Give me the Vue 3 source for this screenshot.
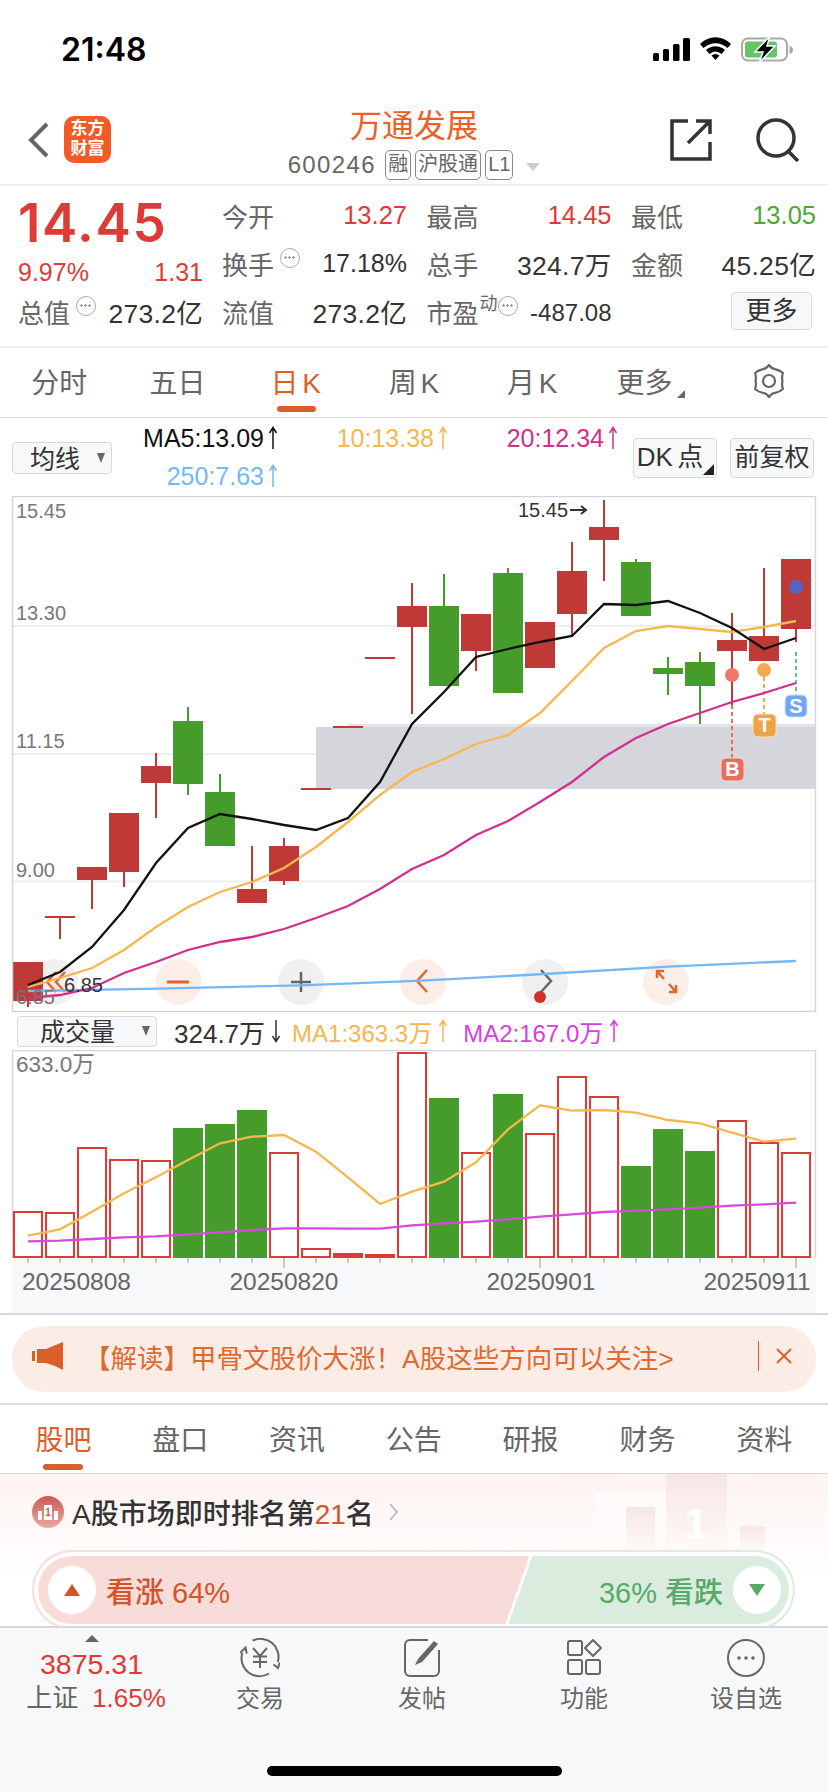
<script setup>
// 25 daily candles: [high, top, bottom, low, up?] in page y coordinates
const candles = [
  [962, 962, 1001, 1007, 1],
  [917, 916, 918, 939, 1],
  [867, 867, 880, 909, 1],
  [813, 813, 872, 887, 1],
  [753, 766, 783, 818, 1],
  [707, 721, 784, 795, 0],
  [774, 792, 846, 846, 0],
  [846, 889, 903, 903, 1],
  [838, 846, 881, 885, 1],
  [789, 788, 790, 790, 1],
  [727, 726, 728, 728, 1],
  [658, 657, 659, 659, 1],
  [583, 606, 627, 714, 1],
  [574, 606, 686, 686, 0],
  [614, 614, 651, 671, 1],
  [568, 573, 693, 693, 0],
  [622, 622, 668, 668, 1],
  [542, 571, 614, 636, 1],
  [500, 527, 540, 581, 1],
  [559, 562, 616, 616, 0],
  [657, 668, 674, 695, 0],
  [652, 662, 686, 724, 0],
  [613, 640, 651, 705, 1],
  [568, 636, 661, 661, 1],
  [559, 559, 629, 642, 1],
];
const cx = (i) => 28 + i * 32;

const ma5 = [985, 972, 947, 910, 863, 828, 814, 819, 825, 830, 818, 782, 724, 692, 657, 649, 642, 636, 604, 605, 601, 613, 628, 649, 638];
const ma10 = [987, 978, 968, 950, 927, 907, 892, 882, 868, 847, 822, 795, 772, 759, 744, 735, 713, 681, 648, 631, 626, 629, 632, 627, 621];
const ma20 = [998, 995, 988, 973, 962, 950, 942, 937, 929, 918, 906, 889, 869, 855, 835, 821, 802, 782, 757, 738, 724, 713, 702, 693, 683];
const toPoints = (arr) => arr.map((y, i) => `${cx(i)},${y}`).join(" ");
const ma250 = "28,991 158,988.7 301,985.3 422,980.7 544,974 668,966.7 796,961";

// volume bars, top y; green when down
const volumes = [1211, 1212, 1147, 1159, 1160, 1128, 1124, 1110, 1152, 1248, 1253, 1254, 1052, 1098, 1152, 1094, 1133, 1076, 1096, 1166, 1129, 1151, 1120, 1142, 1152];
const volDown = [5, 6, 7, 13, 15, 19, 20, 21];
const volMa1 = [587, 568, 515, 460, 412, 360, 310, 290, 285, 335, 412, 492, 455, 425, 367, 268, 196, 212, 210, 218, 240, 250, 278, 305, 296].map((v) => 1040 + v / 3);
const volMa2 = [604, 602, 597, 592, 589, 583, 577, 570, 565, 565, 566, 566, 556, 550, 545, 538, 530, 523, 516, 512, 508, 503, 497, 493, 488].map((v) => 1040 + v / 3);

const legend = [
  { text: "MA5:13.09", color: "#111" },
  { text: "10:13.38", color: "#f5b74e" },
  { text: "20:12.34", color: "#d0308c" },
  { text: "250:7.63", color: "#74b8f8" },
];

const topTabs = ["分时", "五日", "日 K", "周 K", "月 K"];
const lowerTabs = ["股吧", "盘口", "资讯", "公告", "研报", "财务", "资料"];
</script>

<template>
  <div class="page">
    <!-- status bar -->
    <div class="status">
      <span class="time">21:48</span>
      <svg class="status-icons" width="146" height="30" viewBox="650 34 146 30">
        <rect x="653" y="53" width="6" height="8" rx="1.5" fill="#000" />
        <rect x="663" y="49" width="6" height="12" rx="1.5" fill="#000" />
        <rect x="673" y="44" width="6.5" height="17" rx="1.5" fill="#000" />
        <rect x="683" y="38" width="7" height="23" rx="1.5" fill="#000" />
        <path d="M700 44 C709 35 722 35 731 44 L727.5 48 C720.5 41.500 710.500 41.500 703.500 48 Z" fill="#000" />
        <path d="M706 50 C712 45 719 45 725 50 L721.500 54 C717.500 50.500 713.500 50.500 709.500 54 Z" fill="#000" />
        <path d="M711.500 55.500 C714 53.500 717 53.500 719.500 55.500 L715.500 60 Z" fill="#000" />
        <rect x="742" y="38.500" width="45" height="22" rx="6" fill="none" stroke="#a9a9a9" stroke-width="2" />
        <rect x="745" y="41.500" width="32" height="16" rx="3" fill="#64c466" />
        <path d="M789.500 46 C792 46.500 793 48 793 50 C793 52 792 53 789.500 54 Z" fill="#a9a9a9" />
        <path d="M770 36 L755 52 H763 L759 63 L775 46 H767 Z" fill="#000" stroke="#fff" stroke-width="1.500" />
      </svg>
    </div>

    <!-- nav bar -->
    <div class="nav">
      <div class="nav-left">
        <svg width="22" height="36" viewBox="0 0 22 36"><path d="M19 2 L3 18 L19 34" fill="none" stroke="#666" stroke-width="4" /></svg>
        <div class="logo">东方<br />财富</div>
      </div>
      <div class="nav-center">
        <div class="name">万通发展</div>
        <div class="code">
          <span class="code-num">600246</span>
          <span class="tag">融</span>
          <span class="tag">沪股通</span>
          <span class="tag">L1</span>
          <span class="caret"></span>
        </div>
      </div>
      <div class="nav-right">
        <svg width="44" height="44" viewBox="0 0 44 44">
          <path d="M19 3 H3 V41 H41 V24" fill="none" stroke="#333" stroke-width="3.500" />
          <path d="M27 3 H41 V16 M41 3 L19 25" fill="none" stroke="#333" stroke-width="3.500" />
        </svg>
        <svg width="44" height="44" viewBox="0 0 44 44">
          <circle cx="20" cy="20" r="18" fill="none" stroke="#333" stroke-width="3.500" />
          <path d="M32 33 L42 43" stroke="#333" stroke-width="3.500" />
        </svg>
      </div>
    </div>

    <!-- quote -->
    <div class="quote">
      <div class="quote-left">
        <div class="price">14.45</div>
        <div class="cell change"><span>9.97%</span><span>1.31</span></div>
        <div class="cell total"><span class="lab">总值<i class="more-dot"></i></span><span class="val">273.2亿</span></div>
      </div>
      <div class="quote-grid">
        <div class="cell"><span class="lab">今开</span><span class="red">13.27</span></div>
        <div class="cell"><span class="lab">最高</span><span class="red">14.45</span></div>
        <div class="cell"><span class="lab">最低</span><span class="green">13.05</span></div>
        <div class="cell"><span class="lab">换手<i class="more-dot"></i></span><span class="val pct">17.18%</span></div>
        <div class="cell"><span class="lab">总手</span><span class="val">324.7万</span></div>
        <div class="cell"><span class="lab">金额</span><span class="val">45.25亿</span></div>
        <div class="cell"><span class="lab">流值</span><span class="val">273.2亿</span></div>
        <div class="cell"><span class="lab">市盈<sup class="dyn">动</sup><i class="more-dot"></i></span><span class="val small">-487.08</span></div>
        <div class="cell end"><span class="more-btn">更多</span></div>
      </div>
    </div>

    <!-- period tabs -->
    <div class="period-tabs">
      <div v-for="(t, i) in topTabs" :key="t" class="ptab" :class="{ active: i === 2 }">{{ t }}</div>
      <div class="ptab ptab-more">更多<span class="corner"></span></div>
      <div class="ptab">
        <svg width="36" height="36" viewBox="0 0 36 36">
          <path d="M18 2 Q21 6 24.750 6.300 Q28.500 7 31.900 10 Q30.500 14 31.500 18 Q30.500 22 31.900 26 Q28.500 29 24.750 29.700 Q21 30 18 34 Q15 30 11.250 29.700 Q7.500 29 4.100 26 Q5.500 22 4.500 18 Q5.500 14 4.100 10 Q7.500 7 11.250 6.300 Q15 6 18 2 Z" fill="none" stroke="#666" stroke-width="2.200" stroke-linejoin="round" />
          <circle cx="18" cy="18" r="6" fill="none" stroke="#666" stroke-width="2.200" />
        </svg>
      </div>
    </div>

    <!-- moving averages -->
    <div class="ma-row">
      <div class="select sel-ma">均线<span class="down"></span></div>
      <div class="legend">
        <span v-for="l in legend" :key="l.text" class="leg" :style="{ color: l.color }">
          {{ l.text }}
          <svg width="10" height="24" viewBox="0 0 10 24"><path d="M5 23 V2 M1.500 7 L5 1.500 L8.500 7" fill="none" stroke="currentColor" stroke-width="1.500" /></svg>
        </span>
      </div>
      <div class="opt dk">DK 点<span class="corner dark"></span></div>
      <div class="opt">前复权</div>
    </div>

    <!-- price chart, drawn in page coordinates -->
    <svg class="chart" width="828" height="516" viewBox="0 496 828 516">
      <path d="M13 626 H815 M13 754 H815 M13 881.500 H815" stroke="#eeeef2" stroke-width="2" />
      <rect x="316" y="727" width="499" height="62" fill="#d5d6dc" />
      <rect x="348" y="724" width="467" height="3" fill="#e3e4e8" />

      <g>
        <circle cx="55" cy="982" r="23" fill="#f0f0f1" />
        <circle cx="178.500" cy="982" r="23" fill="#fbeee8" />
        <circle cx="301" cy="982" r="23" fill="#f0f0f1" />
        <circle cx="423" cy="982" r="23" fill="#fbeee8" />
        <circle cx="545" cy="982" r="23" fill="#f0f0f1" />
        <circle cx="666" cy="982" r="23" fill="#fbeee8" />
        <path d="M56 972 L47 982 L56 992 M65 972 L56 982 L65 992" fill="none" stroke="#e0662e" stroke-width="2.500" />
        <path d="M167 982 H189" stroke="#e0662e" stroke-width="3" />
        <path d="M291 982 H311 M301 972 V992" stroke="#666" stroke-width="2.500" />
        <path d="M427 970 L417 981 L427 992" fill="none" stroke="#e0662e" stroke-width="2.500" />
        <path d="M541 970 L551 981 L541 992" fill="none" stroke="#666" stroke-width="2.500" />
        <circle cx="540" cy="997" r="6" fill="#d0302a" />
        <path d="M657 978 V971 H664 M657 971 L664 979 M676 985 V992 H669 M676 992 L669 984" fill="none" stroke="#e0662e" stroke-width="2.500" />
      </g>

      <g v-for="(c, i) in candles" :key="i" :fill="c[4] ? '#bf3a36' : '#459c2b'">
        <rect :x="cx(i) - 1" :y="c[0]" width="2" :height="c[3] - c[0]" />
        <rect :x="cx(i) - 15" :y="c[1]" width="30" :height="c[2] - c[1]" />
      </g>

      <path d="M732 705 V758" stroke="#e66f5e" stroke-width="2" stroke-dasharray="4 3" />
      <path d="M764 670 V714" stroke="#f2a94e" stroke-width="2" stroke-dasharray="4 3" />
      <path d="M796 652 V695" stroke="#6fa6f7" stroke-width="2" stroke-dasharray="4 3" />
      <circle cx="732" cy="675" r="7" fill="#f07868" />
      <circle cx="764" cy="670" r="7" fill="#f4a94f" />
      <circle cx="796" cy="587" r="7" fill="#5464c4" />

      <polyline :points="ma250" fill="none" stroke="#74b8f8" stroke-width="2.300" />
      <polyline :points="toPoints(ma20)" fill="none" stroke="#d0308c" stroke-width="2.300" />
      <polyline :points="toPoints(ma10)" fill="none" stroke="#f5b74e" stroke-width="2.300" />
      <polyline :points="toPoints(ma5)" fill="none" stroke="#111" stroke-width="2.300" />

      <g class="mark">
        <rect x="721" y="758" width="23" height="23" rx="5" fill="#e66f5e" stroke="#f9d6d0" />
        <text x="732.500" y="776" fill="#fff">B</text>
        <rect x="753" y="714" width="23" height="23" rx="5" fill="#eda448" stroke="#fbe2bf" />
        <text x="764.500" y="732" fill="#fff">T</text>
        <rect x="785" y="695" width="22" height="22" rx="5" fill="#6fa6f7" stroke="#d5e4fc" />
        <text x="796" y="713" fill="#fff">S</text>
      </g>

      <g class="axis">
        <text x="16" y="518">15.45</text>
        <text x="16" y="620">13.30</text>
        <text x="16" y="748">11.15</text>
        <text x="16" y="877">9.00</text>
        <text x="16" y="1004">6.85</text>
      </g>
      <text class="peak" x="518" y="517">15.45</text>
      <path d="M570 510 H586 M581 506 L586 510 L581 514" fill="none" stroke="#333" stroke-width="2" />
      <text class="peak" x="64" y="992">6.85</text>
      <rect x="12.500" y="496.500" width="803" height="515" fill="none" stroke="#d5d6dc" stroke-width="1.500" />
    </svg>

    <!-- volume header -->
    <div class="vol-head">
      <div class="select sel-vol">成交量<span class="down"></span></div>
      <span class="vol-item vol-now" style="color: #333">324.7万
        <svg width="10" height="24" viewBox="0 0 10 24"><path d="M5 1 V22 M1.500 17 L5 22.500 L8.500 17" fill="none" stroke="currentColor" stroke-width="1.500" /></svg>
      </span>
      <span class="vol-item vol-ma1" style="color: #f5b74e">MA1:363.3万
        <svg width="10" height="24" viewBox="0 0 10 24"><path d="M5 23 V2 M1.500 7 L5 1.500 L8.500 7" fill="none" stroke="currentColor" stroke-width="1.500" /></svg>
      </span>
      <span class="vol-item" style="color: #d63fe0">MA2:167.0万
        <svg width="10" height="24" viewBox="0 0 10 24"><path d="M5 23 V2 M1.500 7 L5 1.500 L8.500 7" fill="none" stroke="currentColor" stroke-width="1.500" /></svg>
      </span>
    </div>

    <!-- volume chart + date axis -->
    <svg class="chart vol-chart" width="828" height="263" viewBox="0 1050 828 263">
      <rect x="12" y="1258" width="804" height="55" fill="#f7f8fa" />
      <path d="M12.500 1258 V1050.500 H815.500 V1258" fill="none" stroke="#d5d6dc" stroke-width="1.500" />
      <template v-for="(top, i) in volumes" :key="i">
        <rect v-if="volDown.includes(i)" :x="cx(i) - 15" :y="top" width="30" :height="1258 - top" fill="#459c2b" />
        <rect v-else-if="1258 - top < 6" :x="cx(i) - 15" :y="top" width="30" :height="1258 - top" fill="#e03a36" />
        <rect v-else :x="cx(i) - 14" :y="top + 1" width="28" :height="1256 - top" fill="#fff" stroke="#e03a36" stroke-width="2" />
        <path :d="`M${cx(i)} 1258 V${i === 8 || i === 16 || i === 24 ? 1268 : 1263}`" stroke="#bbb" stroke-width="1.500" />
      </template>
      <polyline :points="toPoints(volMa1)" fill="none" stroke="#f5b74e" stroke-width="2.300" />
      <polyline :points="toPoints(volMa2)" fill="none" stroke="#d64ae0" stroke-width="2.300" />
      <text class="vol-max" x="16" y="1072">633.0万</text>
      <g class="dates">
        <text x="76.500" y="1290">20250808</text>
        <text x="284" y="1290">20250820</text>
        <text x="541" y="1290">20250901</text>
        <text x="757" y="1290">20250911</text>
      </g>
    </svg>

    <!-- notice -->
    <div class="notice">
      <svg width="32" height="28" viewBox="0 0 32 28">
        <path d="M0 9 H3 V19 H0 Z M5 7 H14 L31 0 V28 L23 24 L14 21 H5 Z" fill="#d9602a" />
      </svg>
      <span class="notice-text">【解读】甲骨文股价大涨！A股这些方向可以关注&gt;</span>
      <span class="notice-sep"></span>
      <svg width="16" height="16" viewBox="0 0 16 16"><path d="M1 1 L15 15 M15 1 L1 15" stroke="#d9602a" stroke-width="2" /></svg>
    </div>

    <!-- lower tabs -->
    <div class="lower-tabs">
      <div v-for="(t, i) in lowerTabs" :key="t" class="ltab" :class="{ active: i === 0 }">{{ t }}</div>
    </div>

    <!-- sentiment panel -->
    <div class="panel">
      <svg class="podium" width="280" height="90" viewBox="548 1474 280 90">
        <defs>
          <linearGradient id="fade" x1="0" y1="0" x2="0" y2="1">
            <stop offset="0" stop-color="#f7e6e4" />
            <stop offset="1" stop-color="#fef9f8" />
          </linearGradient>
          <linearGradient id="fadeLight" x1="0" y1="0" x2="0" y2="1">
            <stop offset="0" stop-color="#fcf3f1" />
            <stop offset="1" stop-color="#fffcfb" />
          </linearGradient>
        </defs>
        <rect x="556" y="1474" width="62" height="76" fill="url(#fadeLight)" />
        <rect x="596" y="1492" width="70" height="58" fill="#fffbfa" />
        <rect x="626" y="1507" width="29" height="43" fill="url(#fade)" />
        <rect x="666" y="1474" width="61" height="76" fill="url(#fade)" />
        <text x="696" y="1538" class="podium-one">1</text>
        <rect x="748" y="1474" width="72" height="76" fill="url(#fadeLight)" />
        <rect x="740" y="1526" width="25" height="24" fill="url(#fade)" />
      </svg>
      <div class="rank">
        <svg width="32" height="32" viewBox="0 0 32 32">
          <defs>
            <linearGradient id="rankBg" x1="0" y1="0" x2="0" y2="1">
              <stop offset="0" stop-color="#cf5a53" />
              <stop offset="1" stop-color="#e9a9a3" />
            </linearGradient>
          </defs>
          <circle cx="16" cy="16" r="16" fill="url(#rankBg)" />
          <path d="M6 24 V15 H10 V24 Z M12 24 V9 H20 V24 Z M22 24 V15 H26 V24 Z" fill="#fff" />
          <text x="16" y="20" class="rank-one">1</text>
        </svg>
        <span class="rank-text">A股市场即时排名第<em>21</em>名</span>
        <svg width="9" height="18" viewBox="0 0 9 18"><path d="M1 1 L8 9 L1 17" fill="none" stroke="#bbb" stroke-width="1.800" /></svg>
      </div>
      <div class="ring">
        <div class="bull-bear">
          <div class="bull">
            <span class="knob"><i class="tri up"></i></span>
            <span>看涨 64%</span>
          </div>
          <div class="bear">
            <span>36% 看跌</span>
            <span class="knob"><i class="tri dn"></i></span>
          </div>
        </div>
      </div>
    </div>

    <!-- bottom bar -->
    <div class="bottom">
      <div class="bar-items">
        <div class="index">
          <i class="index-tri"></i>
          <div class="index-num">3875.31</div>
          <div class="index-row"><span class="gray">上证</span><span class="red">1.65%</span></div>
        </div>
        <div class="bar-item">
          <svg width="40" height="40" viewBox="0 0 40 40" fill="none" stroke="#666" stroke-width="2">
            <path d="M12.600 2.700 A18 18 0 0 1 37.800 24" />
            <path d="M33.500 26.500 L38 30 L39.800 24.500" />
            <path d="M29 35.500 A18 18 0 0 1 2.300 15" />
            <path d="M0.200 15 L5.500 9.500 L6.800 15.500" />
            <path d="M13 10 L20 18 L27 10 M13 18.500 H27 M13 24 H27 M20 18 V30" />
          </svg>
          <span>交易</span>
        </div>
        <div class="bar-item">
          <svg width="40" height="40" viewBox="0 0 40 40" fill="none" stroke="#666" stroke-width="2">
            <path d="M26 2 H8 A5 5 0 0 0 3 7 V33 A5 5 0 0 0 8 38 H32 A5 5 0 0 0 37 33 V12" />
            <path d="M13 27 L16 21 L32 3 L36 6 L20 24 Z" fill="#666" stroke="none" />
          </svg>
          <span>发帖</span>
        </div>
        <div class="bar-item">
          <svg width="40" height="40" viewBox="0 0 40 40" fill="none" stroke="#666" stroke-width="2">
            <rect x="4" y="3" width="14" height="14" rx="2" />
            <rect x="4" y="22" width="14" height="14" rx="2" />
            <rect x="22" y="22" width="14" height="14" rx="2" />
            <path d="M29 2 L37 10 L29 18 L21 10 Z" stroke-linejoin="round" />
          </svg>
          <span>功能</span>
        </div>
        <div class="bar-item">
          <svg width="40" height="40" viewBox="0 0 40 40">
            <circle cx="20" cy="20" r="18" fill="none" stroke="#666" stroke-width="2" />
            <circle cx="13" cy="20" r="1.800" fill="#666" />
            <circle cx="20" cy="20" r="1.800" fill="#666" />
            <circle cx="27" cy="20" r="1.800" fill="#666" />
          </svg>
          <span>设自选</span>
        </div>
      </div>
      <div class="home-bar"></div>
    </div>
  </div>
</template>

<style>
html,
body {
  margin: 0;
  background: #fff;
}
</style>

<style scoped>
.page {
  position: relative;
  width: 828px;
  height: 1792px;
  overflow: hidden;
  background: #fff;
  font-family: "Liberation Sans", "Noto Sans CJK SC", sans-serif;
  color: #333;
}

.status {
  height: 100px;
  display: flex;
  justify-content: space-between;
  padding-left: 61px;
  padding-right: 32px;
}
.time {
  font-family: Inter, sans-serif;
  font-weight: 600;
  font-size: 32px;
  line-height: 100px;
  color: #000;
}
.status-icons {
  margin-top: 34px;
}

.nav {
  height: 84px;
  display: flex;
  border-bottom: 2px solid #efefef;
  position: relative;
}
.nav-left {
  width: 111px;
  display: flex;
  align-items: flex-start;
  padding-left: 28px;
  padding-top: 16px;
  box-sizing: border-box;
}
.nav-left svg {
  margin-top: 6px;
}
.logo {
  margin-left: 14px;
  width: 47px;
  height: 47px;
  border-radius: 10px;
  background: #ef5c26;
  color: #fff;
  font-size: 17px;
  font-weight: 700;
  line-height: 20px;
  text-align: center;
  padding-top: 3px;
  box-sizing: border-box;
}
.nav-center {
  position: absolute;
  left: 0;
  right: 0;
  top: 6px;
  text-align: center;
}
.name {
  color: #ec5f27;
  font-size: 32px;
  line-height: 40px;
  height: 40px;
}
.code {
  display: flex;
  justify-content: center;
  align-items: center;
  gap: 4px;
  height: 32px;
  margin-top: 3px;
}
.code-num {
  font-size: 24px;
  color: #666;
  letter-spacing: 1.4px;
  margin-right: 5px;
}
.tag {
  border: 1px solid #888;
  border-radius: 5px;
  font-size: 20px;
  color: #666;
  height: 28px;
  line-height: 27px;
  padding: 0 2px;
}
.caret {
  margin-left: 9px;
  margin-top: 3px;
  border-left: 7px solid transparent;
  border-right: 7px solid transparent;
  border-top: 8px solid #ccc;
}
.nav-right {
  margin-left: auto;
  display: flex;
  gap: 43px;
  padding-right: 28px;
  padding-top: 18px;
  position: relative;
}

.quote {
  display: flex;
  height: 162px;
  box-sizing: border-box;
  padding: 5px 0 0 18px;
  border-bottom: 2px solid #efefef;
}
.quote-left {
  width: 185px;
  margin-right: 19px;
}
.price {
  height: 54px;
  line-height: 54px;
  margin-top: 5px;
  font-family: Inter, sans-serif;
  font-size: 53px;
  font-weight: 600;
  letter-spacing: 1.6px;
  color: #de3b36;
}
.cell {
  display: flex;
  justify-content: space-between;
  align-items: center;
  height: 48px;
  font-size: 25.5px;
}
.quote-left .change {
  height: 34px;
  margin-top: 5px;
  color: #de3b36;
  font-size: 25px;
}
.quote-left .total {
  height: 44px;
}
.quote-grid {
  display: grid;
  grid-template-columns: repeat(3, 185px);
  grid-auto-rows: 48px;
  align-content: start;
  column-gap: 19.5px;
}
.lab {
  color: #666;
  font-size: 26px;
  display: flex;
  align-items: center;
  white-space: nowrap;
}
.more-dot {
  display: inline-block;
  position: relative;
  width: 20px;
  height: 20px;
  border: 1.5px solid #aaa;
  border-radius: 50%;
  box-sizing: border-box;
  margin-left: 6px;
  margin-top: -10px;
  background: radial-gradient(circle 1.3px at 4.5px 8.5px, #999 95%, transparent),
    radial-gradient(circle 1.3px at 8.5px 8.5px, #999 95%, transparent),
    radial-gradient(circle 1.3px at 12.5px 8.5px, #999 95%, transparent);
}
.dyn {
  font-size: 18px;
  line-height: 18px;
  margin-top: -14px;
  margin-left: 1px;
}
.dyn + .more-dot {
  margin-left: 0;
}
.val {
  color: #333;
  font-size: 26.5px;
  letter-spacing: 0.3px;
}
.val.pct {
  font-size: 25px;
  letter-spacing: 0;
}
.val.small {
  font-size: 24px;
  letter-spacing: 0;
  padding-top: 4px;
}
.red {
  color: #de3b36;
}
.green {
  color: #4fa82e;
}
.end {
  justify-content: flex-end;
  padding-right: 4px;
}
.more-btn {
  width: 81px;
  height: 38px;
  line-height: 37px;
  box-sizing: border-box;
  text-align: center;
  background: #f7f8fa;
  border: 1px solid #dcdce0;
  border-radius: 4px;
  font-size: 26px;
  color: #333;
}

.period-tabs {
  height: 69px;
  display: grid;
  grid-template-columns: repeat(7, 1fr);
  border-bottom: 1px solid #dcdce0;
  position: relative;
}
.ptab {
  position: relative;
  display: flex;
  align-items: center;
  justify-content: center;
  padding-bottom: 3px;
  font-size: 28px;
  word-spacing: -4px;
  color: #666;
}
.ptab-more {
  padding-right: 12px;
}
.ptab.active {
  color: #d95f2b;
}
.ptab.active::after {
  content: "";
  position: absolute;
  left: 50%;
  bottom: 5px;
  width: 39px;
  height: 6px;
  margin-left: -19px;
  border-radius: 3px;
  background: #d95f2b;
}
.corner {
  position: absolute;
  right: 25px;
  bottom: 19px;
  border-left: 8px solid transparent;
  border-bottom: 8px solid #666;
}
.corner.dark {
  right: 2px;
  bottom: 2px;
  border-left-width: 11px;
  border-bottom: 11px solid #222;
}

.ma-row {
  height: 78px;
  display: flex;
  padding-left: 12px;
}
.select {
  position: relative;
  box-sizing: border-box;
  background: #f7f8fa;
  border: 1px solid #d9d9dd;
  border-radius: 4px;
  font-size: 25px;
  display: flex;
  align-items: center;
  padding-bottom: 2px;
  color: #333;
}
.down {
  position: absolute;
  right: 6px;
  top: 50%;
  margin-top: -5px;
  border-left: 4px solid transparent;
  border-right: 4px solid transparent;
  border-top: 10px solid #666;
}
.sel-ma {
  width: 100px;
  height: 32px;
  margin-top: 24px;
  padding-left: 17px;
}
.legend {
  margin-left: -4px;
  display: grid;
  grid-template-columns: repeat(3, 170px);
  grid-auto-rows: 38px;
  padding-top: 1px;
  height: 77px;
}
.leg {
  display: flex;
  align-items: center;
  justify-content: flex-end;
  gap: 4px;
  font-size: 25px;
  white-space: nowrap;
}
.opt {
  position: relative;
  box-sizing: border-box;
  width: 84px;
  height: 40px;
  margin-top: 20px;
  margin-left: 13px;
  background: #f7f8fa;
  border: 1px solid #d9d9dd;
  border-radius: 4px;
  font-size: 25px;
  line-height: 36px;
  text-align: center;
  white-space: nowrap;
}
.dk {
  margin-left: 15px;
  padding-right: 10px;
  font-size: 26px;
  word-spacing: -3px;
}

.chart {
  display: block;
}
.axis text {
  font-size: 20px;
  fill: #777;
}
.vol-max {
  font-size: 22.5px;
  fill: #777;
}
.peak {
  font-size: 20px;
  fill: #333;
}
.mark text {
  font-size: 20px;
  font-weight: 700;
  text-anchor: middle;
}
.dates text {
  font-size: 24.5px;
  fill: #666;
  text-anchor: middle;
}

.vol-head {
  height: 38px;
  display: flex;
  align-items: center;
}
.sel-vol {
  width: 140px;
  height: 31px;
  margin-left: 17px;
  padding-left: 22px;
  margin-right: 17px;
}
.vol-item {
  display: flex;
  align-items: center;
  gap: 6px;
  font-size: 24px;
  margin-right: 12px;
  white-space: nowrap;
}
.vol-now {
  font-size: 26px;
  margin-right: 11px;
}
.vol-ma1 {
  margin-right: 15px;
}

.vol-chart {
  border-bottom: 2px solid #d8d8dc;
}

.notice {
  margin: 11px 12px 0;
  height: 66px;
  border-radius: 32px;
  background: #fbede5;
  display: flex;
  align-items: center;
  padding-left: 20px;
  padding-bottom: 6px;
  box-sizing: border-box;
}
.notice-text {
  margin-left: 20px;
  font-size: 26.5px;
  color: #e0692f;
  white-space: nowrap;
}
.notice-sep {
  width: 1px;
  height: 30px;
  background: #d9602a;
  margin-left: 84px;
  margin-right: 17px;
}

.lower-tabs {
  margin-top: 11px;
  border-top: 2px solid #dcdce0;
  height: 68px;
  display: grid;
  grid-template-columns: repeat(7, 116.8px);
  padding: 0 5px;
  border-bottom: 1px solid #d8d8dc;
}
.ltab {
  position: relative;
  display: flex;
  align-items: center;
  justify-content: center;
  font-size: 28px;
  color: #666;
  padding-bottom: 2px;
}
.ltab.active {
  color: #d95f2b;
}
.ltab.active::after {
  content: "";
  position: absolute;
  left: 50%;
  bottom: 3px;
  width: 40px;
  height: 6px;
  margin-left: -20px;
  border-radius: 3px;
  background: #d95f2b;
}

.panel {
  position: relative;
  height: 152px;
  overflow: hidden;
  background: linear-gradient(#fdf3f1, #fff 70%);
}
.podium {
  position: absolute;
  right: 0;
  top: 0;
}
.podium-one {
  font-size: 42px;
  font-weight: 700;
  fill: #fff;
  text-anchor: middle;
}
.rank {
  position: relative;
  height: 76px;
  display: flex;
  align-items: center;
  padding-left: 32px;
}
.rank-one {
  font-size: 10px;
  fill: #cf5a53;
  text-anchor: middle;
  font-weight: 700;
}
.rank-text {
  margin-left: 8px;
  margin-right: 15px;
  font-size: 28px;
  font-weight: 500;
  color: #333;
  white-space: nowrap;
}
.rank-text em {
  font-style: normal;
  color: #d4532b;
}
.ring {
  position: relative;
  margin: 0 33px 0 32px;
  height: 80px;
  box-sizing: border-box;
  border: 2px solid transparent;
  border-radius: 40px;
  padding: 4px;
  background: linear-gradient(#fff, #fff) padding-box, linear-gradient(90deg, #f8dcd9, #f3e3d8 50%, #daecde) border-box;
}
.bull-bear {
  height: 68px;
  border-radius: 34px;
  overflow: hidden;
  position: relative;
  display: flex;
  background: linear-gradient(109.4deg, #f8dcd9 0 63.4%, #fff 63.4% 63.8%, #daecde 63.8%);
  align-items: center;
  justify-content: space-between;
  padding: 0 8px 0 10px;
  font-size: 29px;
  font-weight: 500;
}
.bull,
.bear {
  display: flex;
  align-items: center;
  gap: 10px;
}
.bull {
  color: #d4532b;
}
.bear {
  color: #59a968;
}
.knob {
  width: 48px;
  height: 48px;
  border-radius: 50%;
  background: #fff;
  display: flex;
  align-items: center;
  justify-content: center;
}
.tri {
  border-left: 8px solid transparent;
  border-right: 8px solid transparent;
}
.tri.up {
  border-bottom: 12px solid #d4532b;
}
.tri.dn {
  border-top: 12px solid #59a968;
}

.bottom {
  position: relative;
  height: 166px;
  box-sizing: border-box;
  background: #f7f8fa;
  border-top: 2px solid #d8d8dc;
}
.bar-items {
  display: grid;
  grid-template-columns: 175px repeat(4, 162px);
  padding-left: 4px;
}
.index {
  display: flex;
  flex-direction: column;
  align-items: center;
}
.index-tri {
  margin-top: 7px;
  border-left: 7px solid transparent;
  border-right: 7px solid transparent;
  border-bottom: 7px solid #666;
}
.index-num {
  color: #de3b36;
  font-size: 28.5px;
  line-height: 34px;
  margin-top: 5px;
}
.index-row {
  display: flex;
  gap: 14px;
  font-size: 26px;
  line-height: 34px;
  margin-left: 9px;
}
.gray {
  color: #666;
}
.bar-item {
  display: flex;
  flex-direction: column;
  align-items: center;
  padding-top: 10px;
  font-size: 24px;
  color: #666;
  line-height: 34px;
}
.bar-item svg {
  margin-bottom: 4px;
}
.home-bar {
  position: absolute;
  left: 267px;
  top: 138px;
  width: 295px;
  height: 10px;
  border-radius: 5px;
  background: #000;
}
</style>
